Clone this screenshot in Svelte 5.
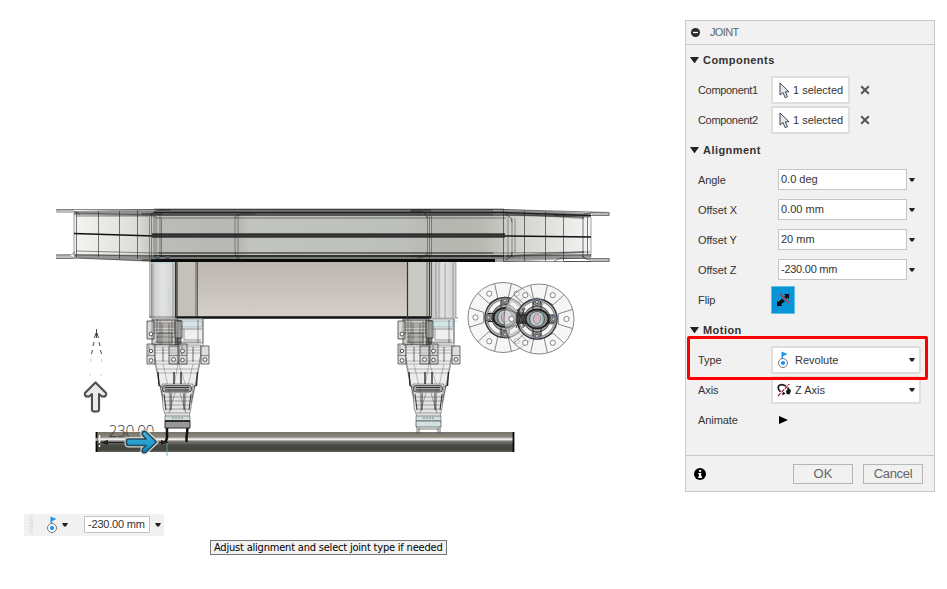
<script>
  const offsets = [
    ['Angle', '0.0 deg'],
    ['Offset X', '0.00 mm'],
    ['Offset Y', '20 mm'],
    ['Offset Z', '-230.00 mm']
  ];
  const discAngles = [60, 120, 180, 240, 300, 0];
  const rad = (a) => (a * Math.PI) / 180;
  const spoke = (a, d, r) => [Math.cos(rad(a + d)) * r, Math.sin(rad(a + d)) * r];
</script>

{#snippet caret()}
  <svg class="caret" width="6" height="4" viewBox="0 0 6 4"><path d="M0 0h6L4 3.500H2z" fill="#222" /></svg>
{/snippet}

{#snippet revolute()}
  <svg width="14" height="18" viewBox="0 0 14 18">
    <path d="M4.500 0.500l6 2.400-4.500 2.400v2.700H4.500z" fill="#1a98f0" />
    <circle cx="6" cy="12" r="4.500" fill="#fff" stroke="#777" />
    <circle cx="6" cy="12" r="2.100" fill="#0b94f5" />
  </svg>
{/snippet}

{#snippet heading(title)}
  <div class="row heading">
    <svg width="9" height="6" viewBox="0 0 9 6"><path d="M0 0h9L4.800 6h-.6z" fill="#222" /></svg>
    <span>{title}</span>
  </div>
{/snippet}

{#snippet leg(dx)}
  <g transform="translate({dx} 0)" fill="none" stroke="#222" stroke-width=".7">
    <path d="M152 319h26v26h-26z" fill="#d2d0cc" />
    <path d="M178 319h25v24h-25z" fill="#edf0ef" stroke-opacity=".6" />
    <path d="M179 321h23v6h-23z" fill="#d4e5e7" stroke="#9aabad" />
    <path d="M153 323h23M153 327h22M154 330h21M152 333h25M157 319v26M160 321v24M172 321v24M175 319v26M179 329h23M181 320v23M198 320v23M203 319v28" stroke-opacity=".65" />
    <path d="M153 320.500h24M154 325h21M155 342h46M156 337h18M162 323v22M169 323v22M184 329v11h17" stroke="#111" stroke-opacity=".55" />
    <path d="M158 333h14v10h-14z" fill="#777" fill-opacity=".35" stroke-opacity=".6" />
    <path d="M178 320v32M180 320v32M176 322v29" stroke="#111" stroke-width="1" />
    <path d="M147 321h7v18h-7zM175 321h7v17h-7z" fill="#bbb" fill-opacity=".55" />
    <path d="M154 345h47l-1 18-5 24h-35l-5-24z" fill="#ecedec" stroke-opacity=".65" />
    <path d="M155 347h45M155 350h45M155 353h45M155 361h45M156 364h43M157 369h41M158 373h39M178 345v18l-4 23M178 362l8 24M155 358l8 45M200 358l-8 45M163 364l5 22M193 364l-5 22" stroke-opacity=".4" />
    <path d="M158 372l1 14M174 372v13M181 372v13M197.500 372l-1 14" stroke-width="1.300" stroke="#222" />
    <path d="M160 385l6 27M195 385l-6 27M163 347v15M193 347v15" stroke-width=".9" stroke-opacity=".7" />
    <path d="M147 344h8v20h-8zM169 346h9v18h-9zM179 344h8v20h-8zM201 346h8v18h-8z" fill="#bbb" fill-opacity=".5" stroke="#333" />
    <path d="M147 355.500h8M169 355.500h9M179 355.500h8M201 355.500h8M149 345v10M182 345v10" stroke-opacity=".6" />
    <g stroke="#333" fill="#fff" stroke-width=".8">
      <circle cx="151" cy="334" r="1.900" /><circle cx="151" cy="351" r="1.700" /><circle cx="151" cy="360.500" r="1.900" />
      <circle cx="173.500" cy="359.500" r="1.900" /><circle cx="182.500" cy="351" r="1.900" /><circle cx="182.500" cy="360" r="1.800" /><circle cx="205" cy="359.500" r="1.900" />
    </g>
    <path d="M162 384h31l-2 24-2 9h-23l-3-9z" fill="#e2e3e2" stroke-opacity=".6" />
    <path d="M163 397h29M164 401h27M164 405h26M165 409h25M165 413h25M169 387l1 24M186 387l-1 24M175 393l-6 20M180 393l6 20" stroke-opacity=".5" />
    <path d="M164 394l2 16M191 394l-2 16M171 393v17M184 393v17" stroke="#222" stroke-width=".9" />
    <rect x="162.500" y="385.500" width="29" height="6.500" rx="2.500" fill="#777" fill-opacity=".55" stroke="#222" />
    <path d="M165 387.500h24M165 390h24" stroke="#111" stroke-width=".8" />
    <path d="M165 416h25v5h-25z" fill="#d2dddd" stroke="#555" stroke-width=".6" />
    <path d="M172 418h11" stroke="#555" stroke-dasharray="2 1" />
  </g>
{/snippet}

{#snippet disc(cx, cy, shift)}
  <g transform="translate({cx} {cy})" fill="none" stroke="#555" stroke-width=".7">
    <circle r="35" fill="#eeeeec" fill-opacity=".55" />
    {#each discAngles as a}
      {@const p = spoke(a, -16, 34.500)}
      {@const q = spoke(a, -15, 20)}
      {@const s = spoke(a, 16, 34.500)}
      {@const t = spoke(a, 15, 20)}
      {@const h = spoke(a, 0, 27.500)}
      <path d="M{p[0]} {p[1]}L{q[0]} {q[1]}L{t[0]} {t[1]}L{s[0]} {s[1]}" />
      <circle cx={h[0]} cy={h[1]} r="2.600" fill="#fff" />
    {/each}
    <g transform="translate({shift} 0)">
      <circle r="20" fill="#b9bbbb" fill-opacity=".85" stroke="#333" stroke-width="1.400" />
      <circle r="18" stroke="#666" />
      <circle r="15.300" stroke="#f7f7f7" stroke-width="3.600" stroke-dasharray="13 11.030" stroke-dashoffset="-6" />
      <circle r="13" stroke="#444" fill="#aeb0b0" stroke-width="1" />
      <g stroke="#333" fill="#999" fill-opacity=".8">
        <circle cy="-17" r="3.500" /><circle cy="17" r="3.500" /><circle cx="-16.500" r="3.500" /><circle cx="16.500" r="3.500" />
        <circle cy="-17" r="1.600" fill="#ddd" /><circle cy="17" r="1.600" fill="#ddd" /><circle cx="-16.500" r="1.600" fill="#ddd" /><circle cx="16.500" r="1.600" fill="#ddd" />
      </g>
      <path d="M-4-17v7M4-17v7M-4 10v7M4 10v7M-17-4h7M-17 4h7M10-4h7M10 4h7" stroke="#222" stroke-width="1" />
      <ellipse rx="11.500" ry="9.500" fill="#8d9090" stroke="#222" stroke-width="2" />
      <circle r="7.500" fill="#bcd0cc" stroke="#555" stroke-width="1" />
      <ellipse rx="3.600" ry="5.200" fill="#d7b6c8" stroke="#777" />
      <path d="M-7-4v8M6-5v10" stroke="#5c7676" />
    </g>
  </g>
{/snippet}

<main>
  <svg class="model" width="947" height="589" viewBox="0 0 947 589">
    <defs>
      <linearGradient id="deck" x1="0" x2="1">
        <stop offset="0" stop-color="#f3f3f1" /><stop offset=".12" stop-color="#deded9" />
        <stop offset=".16" stop-color="#bcbdb9" /><stop offset=".32" stop-color="#b7b8b3" /><stop offset=".34" stop-color="#c1c3bd" />
        <stop offset=".64" stop-color="#bdbfba" /><stop offset=".72" stop-color="#b5b6b0" />
        <stop offset=".79" stop-color="#b8b9b3" /><stop offset=".84" stop-color="#cdcdc8" /><stop offset="1" stop-color="#f5f5f4" />
      </linearGradient>
      <linearGradient id="box" x1="0" x2="0" y1="0" y2="1">
        <stop offset="0" stop-color="#bcb5af" /><stop offset="1" stop-color="#d4cfc9" />
      </linearGradient>
      <linearGradient id="side" x1="0" x2="1">
        <stop offset="0" stop-color="#c6c7c5" /><stop offset=".5" stop-color="#e2e3e2" /><stop offset="1" stop-color="#cdcecd" />
      </linearGradient>
      <linearGradient id="rod" x1="0" x2="0" y1="0" y2="1">
        <stop offset="0" stop-color="#77736a" /><stop offset=".25" stop-color="#8e887d" /><stop offset=".3" stop-color="#b5b0a8" />
        <stop offset=".35" stop-color="#fff" /><stop offset=".4" stop-color="#ddd" /><stop offset=".45" stop-color="#7c7a75" />
        <stop offset=".6" stop-color="#5a5954" /><stop offset=".68" stop-color="#484843" /><stop offset=".9" stop-color="#45453f" /><stop offset="1" stop-color="#66645f" />
      </linearGradient>
      <linearGradient id="blue" x1="0" x2="0" y1="0" y2="1">
        <stop offset="0" stop-color="#49b5de" /><stop offset="1" stop-color="#078bc0" />
      </linearGradient>
      <clipPath id="dimensionClip"><path d="M100 420h29v17h-29zM129 420h30v11.500h-30z" /></clipPath>
    </defs>

    <path d="M150 260h26v58h-26z" fill="url(#side)" />
    <path d="M176 260h231v57H176z" fill="url(#box)" />
    <path d="M176 260h20v57h-20z" fill="#c4c1b9" />
    <path d="M407 260h24v57h-24z" fill="#c9cac4" />
    <path d="M431 260h25v57h-25z" fill="url(#side)" />
    <path d="M176 317.500h255" stroke="#111" stroke-width="2.300" />
    <g fill="none" stroke="#222" stroke-width=".9">
      <path d="M175.500 261v57M177 261v57M407.500 261v57M429.500 261v57" stroke="#333" stroke-width="1.200" />
      <path d="M196 261v57M197.500 261v57M427 261v57M431.500 261v57" stroke-opacity=".7" />
      <path d="M149.500 260v57l2 2M151.500 260v58M153 262v56M173 261v57M436 261v57M439 261v57M445 263v55M453 261v57M456 261v57" stroke-opacity=".38" />
      <path d="M149 317h26M432 318h26" stroke-opacity=".55" />
    </g>
    <path d="M151 263h24M435 321h22M169 288v22M175 319h28" stroke="#bad8dc" fill="none" />

    <path d="M74 211h517v48H74z" fill="url(#deck)" />
    <path d="M74 211l80-2h350l87 4v4l-87-1H154l-80-1zM74 254l80 1h350l87-1v4l-87 4H154l-80-4z" fill="#222" fill-opacity=".42" />
    <g fill="none" stroke="#222">
      <path d="M57 209.500h447l105 3v3h-55M57 212h20l3 3M57 209v3M57 255h14l4-3M57 258h17l80 3M57 255v3M609 258.500h-50l-5 3M609 258v3.500h-105M609 261.500h-45" stroke-opacity=".55" />
      <path d="M56 210h18M56 255h14M56 258.500h18M591 212.500h18v3h-18M591 258.500h18v3h-18" stroke="#777" />
      <path d="M56 210.500h17v2h-17zM57 256h16v2h-16zM592 213h16v2h-16zM592 259h16v2h-16z" fill="#bbb" stroke="none" />
      <path d="M74 233.500L154 236h350l87 1" stroke="#111" stroke-width="1.400" />
      <path d="M152 235.500h353" stroke="#393b3a" stroke-width="4" />
      <path d="M152 234h353M152 237h353" stroke="#222" stroke-width=".8" />
      <path d="M154 212.500h350l87 3M154 256h350" stroke="#1c1c1c" stroke-width="1.400" />
      <path d="M151 260.500h344" stroke="#090909" stroke-width="3" />
      <path d="M76 213l78 2h350l86 2M76 216h78l2 2h350M76 251l80 2h348l86-1M75 255l80 1h350l86-1M154 209h350" stroke-opacity=".5" />
      <path d="M158 210h335M158 214.500h335M158 253h335" stroke="#333" stroke-opacity=".45" stroke-width="1.800" />
      <path d="M76.500 212v45M98.500 211v46M119.500 211v48M137.500 210v49M503.500 210v52M524.500 211v50M545.500 212v49M563.500 213v48M583 215v43M587.500 217v38" stroke-opacity=".6" />
      <path d="M74 213v43M149.500 217v42M151.500 213v47M154 212v46M156 213v46M160 214v44M161.500 218v37M235 217v37M238 215v42M427.500 216v40M429.500 215v44M431.500 216v41M508 215v43M512 218v40M515 218v35M591 217v40" stroke-opacity=".42" />
      <path d="M151 216q3-6 9-6h10M235 218q1-4 6-4h14M427 218q-2-7-8-7h-9M504 214q7 1 8 8M512 252q0 6-7 8M427 253q-2 5-10 5M235 253q1 6 8 7M583 216q0-3 9-3M583 256q2 4 9 4" stroke-opacity=".6" />
      <path d="M142 214h20M142 260h28M411 210.500h20M411 256h20M506 213l78 5M506 256l78-4" stroke="#222" stroke-opacity=".45" stroke-width="2" />
    </g>
    <path d="M155 257.500h5M165 257.500h5" stroke="#4c6062" stroke-width="3" />

    {@render disc(503, 317.500, 2)}
    {@render disc(539, 319, -2)}
    <path d="M517 309l8 18M525 308l-9 20M517 315h11M516 322h11M519 308v20M523 308v20" stroke="#222" fill="none" stroke-width=".9" />
    <path d="M516 312h10v12h-10z" fill="#333" fill-opacity=".5" />
    <path d="M532 300q5-4 9 0M550 316h6v7M533 336q4 4 8 0" stroke="#6370a5" fill="none" />

    {@render leg(0)}
    {@render leg(251)}
    <rect x="96" y="432" width="418" height="20" fill="url(#rod)" />
    <path d="M96.500 432v20M513.500 432v20" stroke="#080808" stroke-width="1.800" />
    <path d="M96 438v4M99.500 435v12" stroke="#fff" stroke-dasharray="3 2" stroke-width="1.300" />
    <path d="M165 421h25v7h-25z" fill="#989a99" stroke="#333" />
    <path d="M165 421h25" stroke="#222" stroke-width="1.700" />
    <path d="M167 428v10l-1.500 4M187.500 428l-1 10v4" fill="none" stroke="#111" stroke-width="2.500" />
    <path d="M416 421h25v6h-25z" fill="#d2e2e3" stroke="#444" stroke-width=".7" />
    <path d="M417 427v7M440 427v7M419 428v6M438 428v6M418 429h21" fill="none" stroke="#555" stroke-width=".8" />
    <path d="M167 443v13" stroke="#57aebb" stroke-width=".8" />

    <g fill="none" stroke="#333" stroke-width=".9">
      <path d="M96.500 329v9M96 333l-1.500 5M97 333l1.500 5M94 342l-1 4M99 342l1 4M92.500 350l-1 4M100.500 350l1 4" />
      <path d="M91 359v3M101.500 359v3M90 374v2M101 374v2" stroke="#ccc" />
    </g>
    <g clip-path="url(#dimensionClip)"><text x="108.500" y="437" class="dimension">230.00</text></g>
    <path d="M104 442.500h26M159 442.500h9" stroke="#222" />
    <path d="M100 442.500l8-2.500v5zM168 442.500l-7-2.500v5z" fill="#222" />
    <g stroke-linejoin="round">
      <path d="M95.500 382.500L106 393Q107 397 102 396.500L99 394V409.500Q99 411.500 96.500 411.500H94.500Q92 411.500 92 409.500V394L89 396.500Q84 397 85 393Z" fill="#e9e9eb" stroke="#eee" stroke-width="4" />
      <path d="M95.500 382.500L106 393Q107 397 102 396.500L99 394V409.500Q99 411.500 96.500 411.500H94.500Q92 411.500 92 409.500V394L89 396.500Q84 397 85 393Z" fill="#e9e9eb" stroke="#4d4d4d" stroke-width="2" />
      <path d="M156.500 442L145.500 452.500Q141 453 142.500 449L146 445.500H129Q126.500 445.500 126.500 443.500V440.500Q126.500 439 129 439H146L142.500 435Q141 431 145.500 431.500Z" fill="none" stroke="#d5d5d3" stroke-width="4" />
      <path d="M156.500 442L145.500 452.500Q141 453 142.500 449L146 445.500H129Q126.500 445.500 126.500 443.500V440.500Q126.500 439 129 439H146L142.500 435Q141 431 145.500 431.500Z" fill="url(#blue)" stroke="#254c5d" stroke-width="1.700" />
    </g>
  </svg>

  <section class="panel">
    <header>
      <svg width="9" height="9" viewBox="0 0 9 9"><circle cx="4.500" cy="4.500" r="4.500" fill="#292929" /><path d="M2 4.500h5" stroke="#fff" stroke-width="1.300" /></svg>
      <span>JOINT</span>
    </header>
    <div class="body">
      {@render heading('Components')}
      {#each ['Component1', 'Component2'] as name}
        <div class="row">
          <span class="label tight">{name}</span>
          <button class="select">
            <svg width="11" height="17" viewBox="0 0 11 17"><path d="M1 1v12l3-2.500 2.200 5.200 2.300-1L6.300 9.800H10z" fill="#e3e9ef" stroke="#3e454c" /></svg>
            <span>1 selected</span>
          </button>
          <svg class="clear" width="10" height="10" viewBox="0 0 10 10"><path d="M1.200 1.200l7.600 7.600M8.800 1.200L1.200 8.800" stroke="#555" stroke-width="2" /></svg>
        </div>
      {/each}
      {@render heading('Alignment')}
      {#each offsets as [name, value]}
        <div class="row">
          <span class="label">{name}</span>
          <div class="field" class:tight={value.length > 8}>{value}</div>
          {@render caret()}
        </div>
      {/each}
      <div class="row">
        <span class="label">Flip</span>
        <div class="flip">
          <svg width="14" height="14" viewBox="0 0 14 14">
            <path d="M8 1h5v5l-1.500-1.500L9 7 7 5l2.500-2.500z" fill="#080808" />
            <path d="M1 7.500l1.500 1.500L5 6.500 7.500 9 5 11.500 6.500 13H1zM5.500 5l3.500 3.500-2 1-2.500-2.500z" fill="#080808" />
            <path d="M4 1l9 9" stroke="#0696d7" stroke-width="2" /><path d="M4 1l9 9" stroke="#d7293a" stroke-width="1.100" />
          </svg>
        </div>
      </div>
      {@render heading('Motion')}
      <div class="row">
        <span class="label">Type</span>
        <div class="dropdown"><i>{@render revolute()}</i><span>Revolute</span>{@render caret()}</div>
      </div>
      <div class="row">
        <span class="label">Axis</span>
        <div class="dropdown">
          <i><svg width="14" height="14" viewBox="0 0 14 14">
            <path d="M6 10C1.500 9 0 4 2.500 2.200C5 .5 11 3 12 7.500" fill="none" stroke="#222" stroke-width="1.700" />
            <path d="M9 7.500l4-1.500 1 2-1.500 3.500-3-.5zM5.500 8l3 2.500-3 2z" fill="#151515" />
            <path d="M1 13L12.500 1" stroke="#fff" stroke-width="2.400" /><path d="M1 13L12.500 1" stroke="#b21e28" stroke-width="1.200" stroke-dasharray="4 1" />
          </svg></i>
          <span>Z Axis</span>{@render caret()}
        </div>
      </div>
      <div class="row">
        <span class="label">Animate</span>
        <svg class="play" width="9" height="8" viewBox="0 0 9 8"><path d="M0 0l9 4-9 4z" fill="#000" /></svg>
      </div>
    </div>
    <footer>
      <svg width="12" height="12" viewBox="0 0 12 12"><circle cx="6" cy="6" r="6" fill="#000" /><path d="M5 2h2.200v1.800H5zM4.300 5h2.900v3.500H8V10H4.200V8.500H5V6.300h-.7z" fill="#fff" /></svg>
      <button>OK</button>
      <button class="cancel">Cancel</button>
    </footer>
  </section>
  <div class="highlight"></div>

  <div class="toolbar">
    <svg class="grip" width="4" height="18" viewBox="0 0 4 18"><path d="M1 0v18M3 1v17" stroke="#c8c8c8" stroke-dasharray="1.500 1.500" /></svg>
    <i>{@render revolute()}</i>
    {@render caret()}
    <div class="value">-230.00 mm</div>
    {@render caret()}
  </div>
  <div class="tooltip"><span>Adjust alignment and select joint type if needed</span></div>
</main>

<style>
  :global(body) { margin: 0; background: #fff; }
  main { position: relative; width: 947px; height: 589px; overflow: hidden; background: #fff; color: #333; font: 11px/14px "Liberation Sans", Arial, sans-serif; }
  svg { display: block; flex: none; }
  .dimension { font: 300 15.5px "Open Sans", sans-serif; letter-spacing: -.4px; fill: #333; }
  .panel { position: absolute; left: 685px; top: 20px; width: 250px; height: 472px; box-sizing: border-box; display: flex; flex-direction: column; border: 1px solid #c8c8c8; background: #f1f1f1; }
  header { height: 23px; display: flex; align-items: center; gap: 10px; padding-left: 5px; border-bottom: 1px solid #c8c8c8; color: #666; letter-spacing: -.65px; }
  header span { margin-top: -1px; }
  .body { flex: 1; }
  .row { height: 30px; display: flex; align-items: center; }
  .heading { gap: 4px; padding-left: 4px; font-weight: bold; letter-spacing: .45px; }
  .label { width: 73px; padding-left: 12px; white-space: nowrap; letter-spacing: -.08px; }
  .label.tight { letter-spacing: -.32px; }
  .tight { letter-spacing: -.26px; }
  button { font: inherit; color: inherit; margin: 0; }
  .select { width: 79px; height: 28px; box-sizing: border-box; display: flex; align-items: center; gap: 3px; padding: 0 0 0 6px; border: 2px solid #dedede; border-radius: 2px; background: #fff; color: #333; white-space: nowrap; }
  .clear { margin-left: 10px; }
  .field { width: 129px; height: 21px; box-sizing: border-box; margin: 0 2px 1px 7px; padding: 2px 2px; border: 1px solid #c5c5c5; background: #fff; }
  .flip { width: 24px; height: 28px; box-sizing: border-box; display: grid; place-items: center; border: 1px solid #63bce7; background: #0696d7; }
  .dropdown { width: 150px; height: 28px; box-sizing: border-box; display: flex; align-items: center; padding: 0 4px; border: 2px solid #dedede; border-radius: 2px; background: #fff; }
  .dropdown i { width: 18px; }
  .dropdown span { flex: 1; }
  .play { margin-left: 8px; }
  footer { height: 35px; display: flex; align-items: center; border-top: 1px solid #c8c8c8; padding-left: 8px; }
  footer button { width: 60px; height: 20px; box-sizing: border-box; padding: 0; border: 1px solid #b6b6b6; background: #f1f1f1; color: #666; font-size: 13px; line-height: 17px; margin-left: 87px; }
  footer button.cancel { margin-left: 10px; letter-spacing: -.3px; }
  .highlight { position: absolute; left: 687px; top: 336px; width: 241px; height: 44px; box-sizing: border-box; border: 3px solid #f00; border-radius: 2px; }
  .toolbar { position: absolute; left: 24px; top: 514px; width: 140px; height: 22px; display: flex; align-items: center; background: #f1f1f1; }
  .grip { margin-left: 5px; }
  .toolbar i { width: 14px; margin: 0 2px 0 13px; }
  .value { width: 66px; height: 17px; box-sizing: border-box; margin: 0 5px 1px 16px; border: 1px solid #c4c4c4; background: #fff; line-height: 15px; padding-left: 3px; letter-spacing: -.2px; white-space: nowrap; }
  .tooltip { position: absolute; left: 210px; top: 540px; width: 237px; height: 15px; box-sizing: border-box; padding-left: 3px; border: 1px solid #777; background: #f1f1f1; color: #000; font: 11px/14px "DejaVu Sans Condensed", "DejaVu Sans", sans-serif; font-stretch: condensed; letter-spacing: -.2px; white-space: nowrap; }
</style>
